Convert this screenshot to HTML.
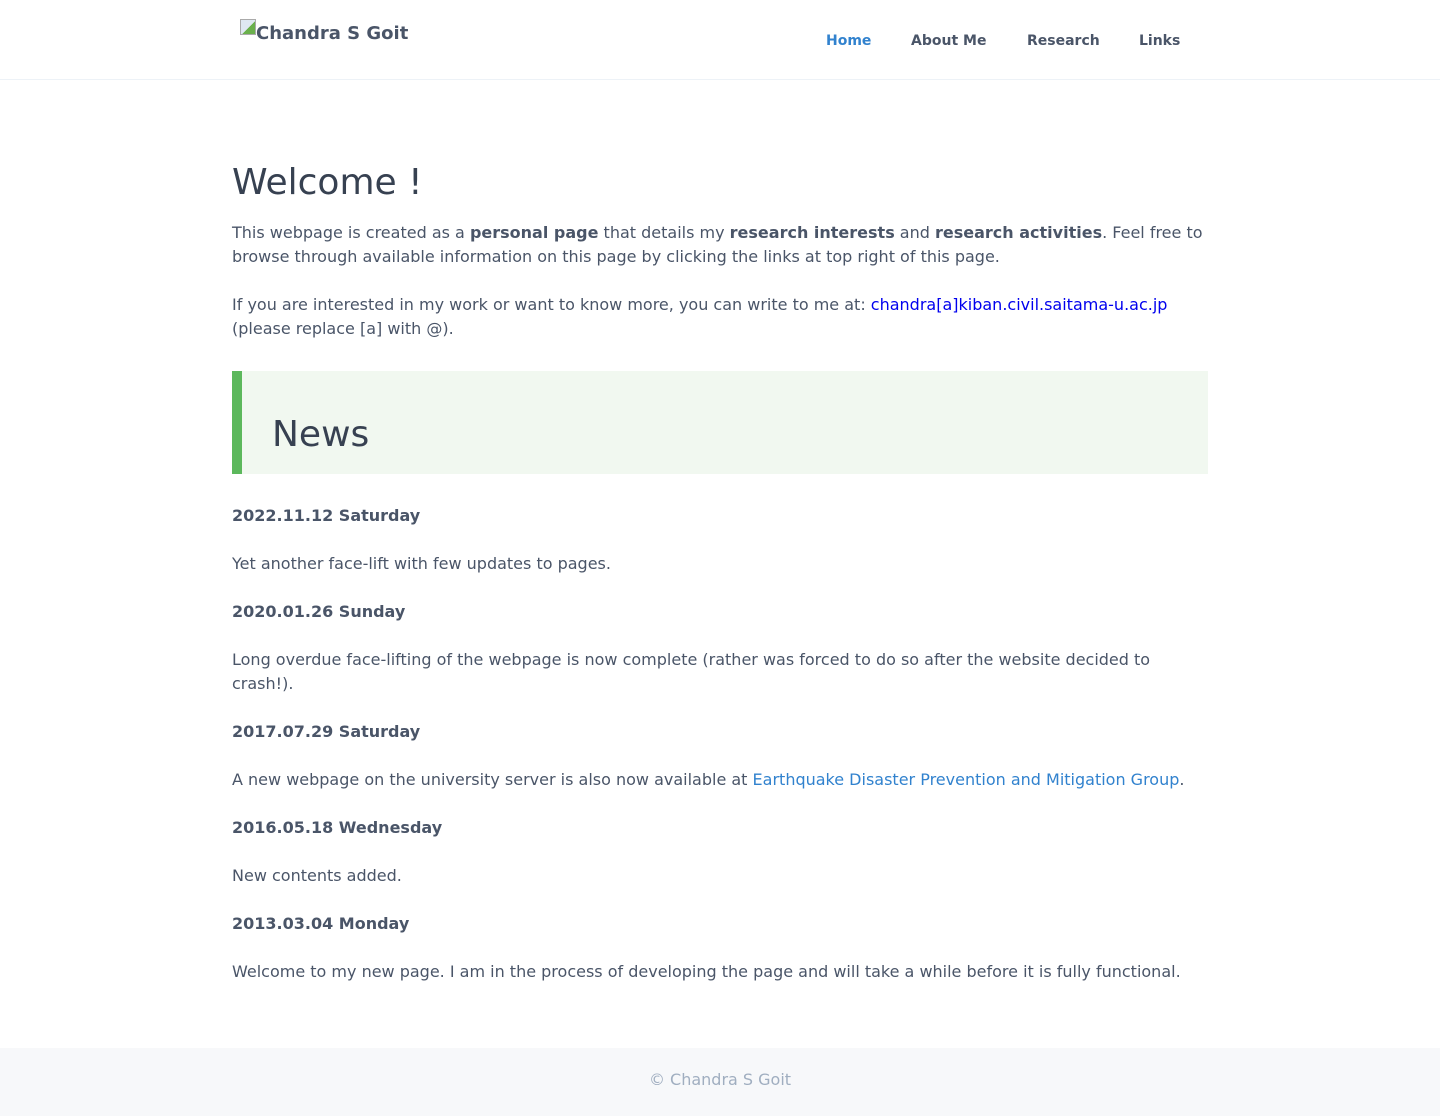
<!DOCTYPE html>
<html><head><meta charset="utf-8"><style>
*{box-sizing:border-box;margin:0;padding:0}
body{width:1440px;height:1116px;font-family:"DejaVu Sans",sans-serif;color:#4a5568;background:#fff;font-size:16px;line-height:24px;position:relative}
header{height:80px;border-bottom:1px solid #edf2f7;position:relative}
.logo{position:absolute;left:240px;top:21px;font-weight:bold;font-size:18px;color:#4a5568;line-height:26px;display:flex;align-items:flex-start}
.logo i{display:inline-block;width:16px;height:16px;border:1px solid #aaa;background:linear-gradient(135deg,#dfe8f2 55%,#6ab04c 55%);margin-top:-2px}
nav{position:absolute;top:32px;left:826px;font-size:14px;font-weight:bold;line-height:18px}
nav a{position:absolute;white-space:nowrap;color:#4a5568;text-decoration:none}
main{position:absolute;left:232px;top:161px;width:976px}
h1{font-size:36px;font-weight:normal;color:#374151;line-height:43px;margin-bottom:17px}
p{margin-bottom:24px}
b{color:#4a5568}
.news{background:#f1f8f0;border-left:10px solid #5cb85c;height:103px;margin-top:30px;margin-bottom:30px;padding-left:30px;padding-top:42px}
.news h2{font-size:36px;font-weight:normal;color:#374151;line-height:43px}
a.e{color:#0000ee;text-decoration:none}
a.l{color:#3182ce;text-decoration:none}
footer{position:absolute;left:0;top:1048px;width:1440px;height:68px;background:#f7f8fa;text-align:center;color:#a0aec0;line-height:64px}
</style></head><body>
<header>
<div class="logo"><i></i>Chandra S Goit</div>
<nav><a style="left:0;color:#3182ce">Home</a><a style="left:85px">About Me</a><a style="left:201px">Research</a><a style="left:313px">Links</a></nav>
</header>
<main>
<h1>Welcome !</h1>
<p>This webpage is created as a <b>personal page</b> that details my <b>research interests</b> and <b>research activities</b>. Feel free to browse through available information on this page by clicking the links at top right of this page.</p>
<p style="margin-bottom:0">If you are interested in my work or want to know more, you can write to me at: <a class="e">chandra[a]kiban.civil.saitama-u.ac.jp</a> (please replace [a] with @).</p>
<div class="news"><h2>News</h2></div>
<p><b>2022.11.12 Saturday</b></p>
<p>Yet another face-lift with few updates to pages.</p>
<p><b>2020.01.26 Sunday</b></p>
<p>Long overdue face-lifting of the webpage is now complete (rather was forced to do so after the website decided to crash!).</p>
<p><b>2017.07.29 Saturday</b></p>
<p>A new webpage on the university server is also now available at <a class="l">Earthquake Disaster Prevention and Mitigation Group</a>.</p>
<p><b>2016.05.18 Wednesday</b></p>
<p>New contents added.</p>
<p><b>2013.03.04 Monday</b></p>
<p>Welcome to my new page. I am in the process of developing the page and will take a while before it is fully functional.</p>
</main>
<footer>© Chandra S Goit</footer>
</body></html>
